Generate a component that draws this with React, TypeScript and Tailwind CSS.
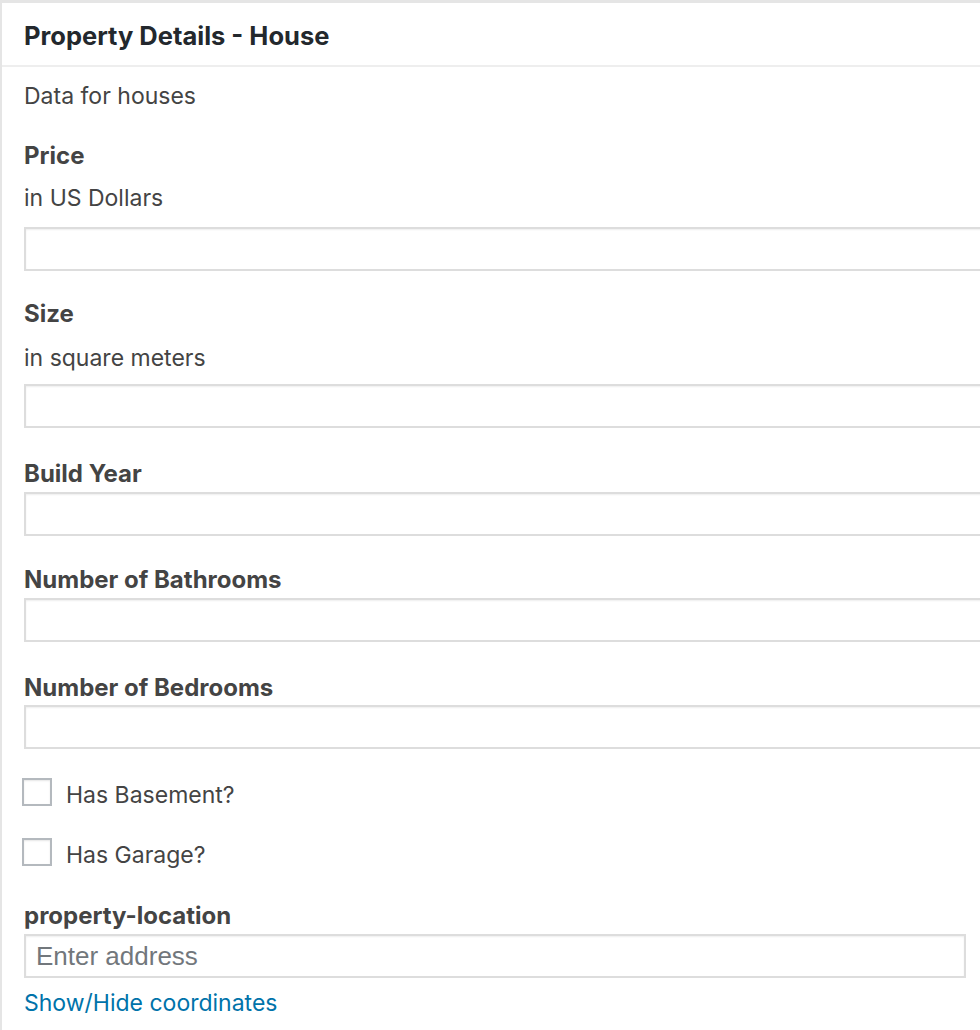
import React from "react";

const font = { fontFamily: "Inter, 'Noto Sans', sans-serif" };

function TextInput() {
  return (
    <input
      type="text"
      className="block h-[44px] w-[1000px] border-2 border-[#dddddd] bg-white shadow-[inset_0_1px_2px_rgba(0,0,0,0.07)] outline-none"
    />
  );
}

function Label({ children, className = "" }: { children: React.ReactNode; className?: string }) {
  return (
    <div className={"h-[32px] text-[24px] leading-[32px] font-bold text-[#444444] " + className}>
      {children}
    </div>
  );
}

function Desc({ children, className = "" }: { children: React.ReactNode; className?: string }) {
  return (
    <div className={"h-[32px] text-[23px] leading-[32px] text-[#444444] " + className}>
      {children}
    </div>
  );
}

function Check({ label, className = "" }: { label: string; className?: string }) {
  return (
    <label className={"flex h-[32px] items-center " + className}>
      <span className="ml-[-2px] h-[28px] w-[30px] border-2 border-[#b4b9be] bg-white shadow-[inset_0_1px_2px_rgba(0,0,0,0.1)]" />
      <span className="ml-[14px] mt-[6px] text-[23px] text-[#444444]">{label}</span>
    </label>
  );
}

export default function App() {
  return (
    <div className="h-[1030px] w-[980px] overflow-hidden bg-[#e5e5e5] pl-[2px] pt-[3px]" style={font}>
      <div className="h-full w-[1000px] bg-white">
        {/* header */}
        <div className="flex h-[64px] items-center border-b-2 border-[#eeeeee] px-[22px] pt-[4px]">
          <h2 className="text-[25.5px] font-bold text-[#23282d]">Property Details - House</h2>
        </div>

        {/* fields */}
        <div className="pl-[22px]">
          <Desc className="mt-[13px]">Data for houses</Desc>

          <Label className="mt-[28px]">Price</Label>
          <Desc className="mt-[10px]">in US Dollars</Desc>
          <div className="mt-[13px]">
            <TextInput />
          </div>

          <Label className="mt-[27px]">Size</Label>
          <Desc className="mt-[12px]">in square meters</Desc>
          <div className="mt-[10px]">
            <TextInput />
          </div>

          <Label className="mt-[30px]">Build Year</Label>
          <div className="mt-[2px]">
            <TextInput />
          </div>

          <Label className="mt-[28px]">Number of Bathrooms</Label>
          <div className="mt-[2px]">
            <TextInput />
          </div>

          <Label className="mt-[30px]">Number of Bedrooms</Label>
          <div className="mt-[1px]">
            <TextInput />
          </div>

          <Check label="Has Basement?" className="mt-[27px]" />
          <Check label="Has Garage?" className="mt-[28px]" />

          <Label className="mt-[32px]">property-location</Label>
          <div className="mt-[2px]">
            <input
              type="text"
              placeholder="Enter address"
              className="block h-[44px] w-[942px] border-2 border-[#dddddd] bg-white px-[10px] font-['Liberation_Sans',Arial,sans-serif] text-[26px] text-[#32373c] shadow-[inset_0_1px_2px_rgba(0,0,0,0.07)] outline-none placeholder:text-[#72777c]"
            />
          </div>
          <div className="mt-[9px] h-[32px] text-[23px] leading-[32px] text-[#0073aa]">
            <a href="#">Show/Hide coordinates</a>
          </div>
        </div>
      </div>
    </div>
  );
}
